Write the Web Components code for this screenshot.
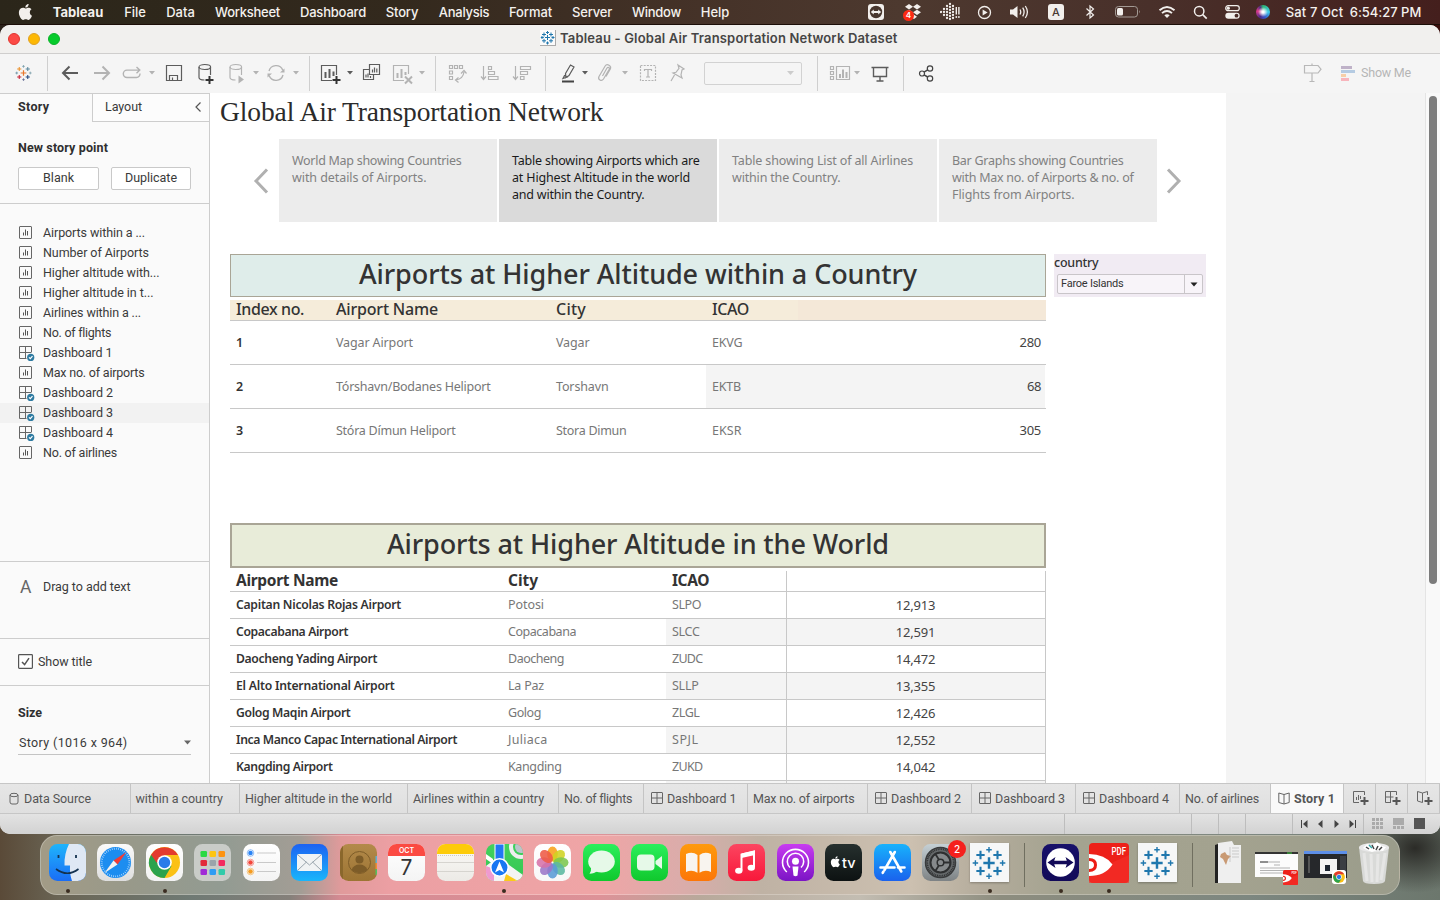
<!DOCTYPE html>
<html lang="en">
<head>
<meta charset="utf-8">
<title>Tableau - Global Air Transportation Network Dataset</title>
<style>
html,body{margin:0;padding:0;width:1440px;height:900px;overflow:hidden}
body{font-family:Roboto,"Liberation Sans",sans-serif;font-size:12px;color:#333}
</style>
</head>
<body>
<mac-desktop>
  <mac-menubar></mac-menubar>
  <app-window>
    <title-bar slot="title"></title-bar>
    <tool-bar slot="tools"></tool-bar>
    <story-sidebar slot="side"></story-sidebar>
    <story-canvas slot="main"></story-canvas>
    <sheet-tabs slot="tabs"></sheet-tabs>
    <status-bar slot="status"></status-bar>
  </app-window>
  <mac-dock></mac-dock>
</mac-desktop>
<script>
const define=(name,css,html)=>customElements.define(name,class extends HTMLElement{
  constructor(){super();this.attachShadow({mode:'open'});}
  connectedCallback(){
    if(this.shadowRoot.childNodes.length)return;
    this.shadowRoot.innerHTML='<style>*,:host{box-sizing:border-box}'+css+'</style>'+(typeof html==='function'?html(this):html);
  }
});

/* Text run tracked to an exact advance width (w attribute, px). */
customElements.define('fit-text',class extends HTMLElement{
  constructor(){super();this.attachShadow({mode:'open'}).innerHTML='<style>:host{display:inline-block;white-space:nowrap;flex:none}span{display:inline-block;white-space:pre}</style><span><slot></slot></span>';}
  connectedCallback(){queueMicrotask(()=>{
    const w=+this.getAttribute('w');if(!w)return;
    const s=this.shadowRoot.querySelector('span'),n=this.textContent.length;
    s.style.letterSpacing=((w-s.getBoundingClientRect().width)/n).toFixed(3)+'px';
    this.style.width=w+'px';
  });}
});
const T=(t,w,c='')=>`<fit-text w="${w}" class="${c}">${t}</fit-text>`;
const svg=(w,h,body,extra='')=>`<svg width="${w}" height="${h}" viewBox="0 0 ${w} ${h}" fill="none" ${extra}>${body}</svg>`;
/* Lays items in a flex row; each entry is [start, width, html], gaps become margins. */
const row=(items,start=0)=>{let x=start;return items.map(([l,w,h])=>{const m=l-x;x=l+w;return `<div class="c" style="margin-left:${m}px;width:${w}px">${h}</div>`}).join('')};

const D='#5c5c5c',G='#b3b3b3';
const plus=(x,y,r,c,w)=>`<path d="M${x-r} ${y}h${2*r}M${x} ${y-r}v${2*r}" stroke="${c}" stroke-width="${w}"/>`;
const tableauLogo=(s,c)=>{c=c||['#e8762c','#eb912b','#59879b','#c72035','#1f447e','#7199a6','#5b6591','#59879b','#7199a6'];
 return `<svg width="${s}" height="${s}" viewBox="0 0 36 36" fill="none">`+plus(18,18,6,c[0],2.6)+plus(9,9.5,4.4,c[1],2.2)+plus(27,9.5,4.4,c[2],2.2)+plus(9,26.5,4.4,c[3],2.2)+plus(27,26.5,4.4,c[4],2.2)+plus(18,4,2.9,c[5],1.5)+plus(18,32,2.9,c[6],1.5)+plus(3.6,18,2.9,c[7],1.5)+plus(32.4,18,2.9,c[8],1.5)+'</svg>'};
const blue=Array(9).fill('#1f77ad');
const caret=c=>svg(6,4,`<path d="M0 0h6L3 3.5z" fill="${c}"/>`);
const dash4=(c)=>svg(12,12,`<rect x=".5" y=".5" width="11" height="11" rx=".5" stroke="${c}"/><path d="M6 .5v11M.5 6h11" stroke="${c}"/>`);
const apple=(s,c)=>`<svg width="${s}" height="${s}" viewBox="0 0 24 24"><path fill="${c}" d="M17.05 12.54c-.03-2.7 2.2-4 2.3-4.06-1.25-1.83-3.2-2.08-3.9-2.11-1.66-.17-3.24.98-4.08.98-.84 0-2.14-.95-3.52-.93-1.81.03-3.48 1.05-4.41 2.67-1.88 3.26-.48 8.1 1.35 10.75.9 1.3 1.97 2.75 3.37 2.7 1.35-.05 1.86-.87 3.5-.87 1.63 0 2.1.87 3.52.84 1.46-.02 2.38-1.32 3.27-2.62 1.03-1.5 1.46-2.96 1.48-3.04-.03-.01-2.84-1.09-2.88-4.31zM14.37 4.6c.74-.9 1.24-2.15 1.1-3.4-1.07.04-2.37.71-3.13 1.61-.69.8-1.29 2.07-1.13 3.29 1.2.09 2.42-.6 3.16-1.5z"/></svg>`;

define('mac-desktop',`:host{display:flex;flex-direction:column;width:1440px;height:900px;
 background:linear-gradient(90deg,#2b221b,#3a0f0c) 0 0/100% 60px no-repeat,radial-gradient(ellipse 60px 45px at 1415px 848px,#2b2b27,transparent),linear-gradient(90deg,#5a4a38 0,#6a6555 60px,#6f7a74 190px,#85807a 290px,#d48a92 340px,#dd9298 600px,#b8a99b 700px,#c3bdb2 860px,#8d8d7f 1000px,#7d8780 1250px,#6c776d 1440px)}`,'<slot></slot>');

define('mac-menubar',`:host{display:flex;align-items:flex-start;height:25px;font:500 13px Inter,sans-serif;color:#f4f1ee;flex:none;
 background:linear-gradient(180deg,transparent 24px,#1c0e08 24px),linear-gradient(90deg,#2b261a 0,#33291d 400px,#453228 700px,#4d392f 900px,#49302a 1150px,#441f1d 1440px)}
 .c{display:flex;justify-content:center;flex:none;height:24px;align-items:center;position:relative}
 .badge{position:absolute;left:0;top:10px;width:11px;height:11px;border-radius:6px;background:#fb2a14;color:#fff;font:600 8px/11px Inter;text-align:center}
 .siri{width:14px;height:14px;border-radius:7px;background:radial-gradient(circle at 50% 50%,#fff 0 1px,transparent 5px),conic-gradient(#2bb673,#3ecbe8 90deg,#3456c9 160deg,#4a2a8a 210deg,#e23a8c 280deg,#50307e 330deg,#2bb673)}
 .a{width:16px;height:16px;border-radius:3px;background:#f2efec;color:#4a3a33;font:500 11px/16px Inter;text-align:center}`,
 ()=>row([
 [17,18,apple(18,'#f2efec')],
 [53,50,T('Tableau',50.5).replace('<fit-text','<fit-text style="font-weight:700"')],
 [124,22,T('File',21.5)],[166,29,T('Data',28.5)],[215,65,T('Worksheet',65)],[300,66,T('Dashboard',66)],[386,32,T('Story',32.5)],[439,50,T('Analysis',50.5)],[509,43,T('Format',43)],[572,40,T('Server',40)],[632,49,T('Window',49)],[701,28,T('Help',28.5)],
 [868,16,svg(16,16,'<rect width="16" height="16" rx="3" fill="#f2efec"/><circle cx="8" cy="8" r="6.2" fill="#48362d"/><path d="M2.8 8l3-2.5v1.6h4.4V5.5l3 2.5-3 2.5V8.9H5.8v1.6z" fill="#f2efec"/>')],
 [903,20,svg(20,18,'<path d="M6 1l4 2.7-4 2.7-4-2.7zM14 1l4 2.7-4 2.7-4-2.7zM6 6.7l4 2.6-4 2.7-4-2.7zM14 6.7l4 2.6-4 2.7-4-2.7zM10 11l4 2.7-3 2.3-4-2.3z" fill="#f2efec"/>')+'<span class="badge">4</span>'],
 [940,20,svg(20,20,[[1.5,[10]],[4.5,[7,10,13]],[7.5,[4,7,10,13,16]],[10.5,[2,5,8,11,14,17]],[13.5,[4,7,10,13,16]]].map(([x,ys])=>ys.map(y=>`<circle cx="${x-.5}" cy="${y}" r="1.15" fill="#f2efec"/>`).join('')).join('')+'<path d="M16.3 5v7.5M18.9 5v7.5" stroke="#f2efec" stroke-width="1.4"/><circle cx="16.3" cy="15" r=".9" fill="#f2efec"/><circle cx="18.9" cy="15" r=".9" fill="#f2efec"/>')],
 [977,15,svg(15,15,'<circle cx="7.5" cy="7.5" r="6" stroke="#f2efec" stroke-width="1.3"/><path d="M5.6 4.5l5 3-5 3z" fill="#f2efec"/>')],
 [1009,20,svg(20,16,'<path d="M1 5.5h3L8.5 2v12L4 10.5H1z" fill="#f2efec"/><path d="M11 5.5q1.5 2.5 0 5M13.7 3.7q2.8 4.3 0 8.6M16.3 2q4.2 6 0 12" stroke="#f2efec" stroke-width="1.3"/>')],
 [1048,16,'<div class="a">A</div>'],
 [1085,10,svg(10,16,'<path d="M1.5 4.5l7 6.500L5 14V2l3.500 3-7 6.500" stroke="#f2efec" stroke-width="1.2"/>')],
 [1114,27,svg(27,14,'<rect x="1.5" y="1.5" width="22" height="10.5" rx="3" stroke="#a39a94"/><path d="M25 5q1.6 1.7 0 3.5z" fill="#a39a94"/><rect x="3" y="3" width="6" height="7.5" rx="1.5" fill="#f2efec"/>')],
 [1158,18,svg(18,14,'<path d="M1.5 5.2q7.500-6.600 15 0M4 8.100q5-4.300 10 0" stroke="#f2efec" stroke-width="1.900"/><path d="M6.300 10.300q2.700-2.200 5.400 0L9 13z" fill="#f2efec"/>')],
 [1193,15,svg(15,15,'<circle cx="6.200" cy="6.200" r="4.700" stroke="#f2efec" stroke-width="1.500"/><path d="M9.700 9.700l4 4" stroke="#f2efec" stroke-width="1.700"/>')],
 [1225,15,svg(15,14,'<rect x=".7" y=".7" width="13.600" height="5" rx="2.500" stroke="#f2efec" stroke-width="1.200"/><circle cx="3.300" cy="3.200" r="1.600" fill="#f2efec"/><rect x=".3" y="7.700" width="14.400" height="6" rx="3" fill="#f2efec"/><circle cx="11.500" cy="10.700" r="1.900" fill="#4a2c28"/>')],
 [1256,14,'<div class="siri"></div>'],
 [1286,57,T('Sat 7 Oct',57.5)],[1350,71,T('6:54:27 PM',71.5)]
 ]));

define('app-window',`:host{display:flex;flex-direction:column;width:1440px;height:809px;border-radius:10px;overflow:hidden;background:#f4f4f4;flex:none}
 .mid{display:flex;height:690px;flex:none}`,
 '<slot name="title"></slot><slot name="tools"></slot><div class="mid"><slot name="side"></slot><slot name="main"></slot></div><slot name="tabs"></slot><slot name="status"></slot>');

define('title-bar',`:host{display:flex;align-items:center;height:29px;border-bottom:1px solid #cfcecd;background:#f1f0ee;flex:none;padding-left:8px;font:600 13px Inter,sans-serif;color:#464544}
 i{width:12px;height:12px;border-radius:6px;margin-right:8px;flex:none}
 fit-text{margin-bottom:2px}
 .ic{width:16px;height:16px;background:#fbfbfb;border-right:1px solid #aaa;border-bottom:1px solid #aaa;margin:0 4px 2px 472px;display:flex;align-items:center;justify-content:center}`,
 `<i style="background:#fc4a45;border:1px solid #e0352f"></i><i style="background:#fdb803;border:1px solid #dfa023"></i><i style="background:#06cb2b;border:1px solid #0bb12a"></i><div class="ic">${svg(15,15,'<path d="M7.500 5v5M5 7.500h5M4 2.500v4M2 4.500h4M11 2.500v4M9 4.500h4M4 8.800v4M2 10.800h4M11 8.800v4M9 10.800h4M7.500 1v3M6 2.500h3M7.500 11.500v3M6 13h3M.8 7.500h3M2 6v3M11.500 7.500h3M13 6v3" stroke="#1f77ad" stroke-width="1"/>')}</div>${T('Tableau - Global Air Transportation Network Dataset',337.5)}`);

define('tool-bar',`:host{display:flex;align-items:center;height:39px;background:#f5f5f5;flex:none}
 .c{display:flex;justify-content:center;align-items:center;flex:none;height:39px;padding-bottom:1px}
 .s{width:1px;height:35px;background:#cfcfcf}.combo{width:98px;height:23px;border:1px solid #d2d2d2;border-radius:2px;display:flex;align-items:center;justify-content:flex-end;padding-right:6px}
 .sm{color:#b5b5b5;font:12.5px Roboto;margin-bottom:1px}svg{display:block}`,
 ()=>{const S='<div class="s"></div>';
 const I=(c,b)=>svg(24,24,b,`stroke="${c}" stroke-width="1.200"`);
 const ca=(cx,c)=>[cx-3,6,caret(c)];
 const cyl='<path d="M5 6v10.500c0 1.500 2.500 2.500 5.500 2.500M16.500 6v8"/><ellipse cx="10.800" cy="6" rx="5.800" ry="2.500"/>';
 return row([
 [15,17,tableauLogo(18)],[47,1,S],
 [58,24,I(D,'<path d="M20 12H5M11.500 5.500L5 12l6.500 6.500" stroke-width="2"/>')],
 [90,24,I(G,'<path d="M4 12h15M12.500 5.500L19 12l-6.500 6.500" stroke-width="2"/>')],
 [122,20,svg(20,16,`<path d="M9.500 12.500H5a3.700 3.700 0 0 1 0-7.400h12M14.500 2l3.300 3.100L14.500 8.300M18 8.500a3.800 3.800 0 0 1-3.500 4h-5" stroke="${G}" stroke-width="1.400"/>`)],
 ca(152,G),
 [163,22,svg(22,24,`<path d="M3.500 4.500h15v15h-15zM6.500 19.500v-5h8v5M9.500 19v-2.500" stroke="${D}" stroke-width="1.200"/>`)],
 [194,24,I(D,cyl+'<path d="M15.500 15v8M11.500 19h8" stroke="#333" stroke-width="2"/>')],
 [225,24,I(G,cyl+`<path d="M13.500 14.500v8l5.500-4z" fill="${G}" stroke="none"/>`)],
 ca(256,G),
 [264,24,I(G,'<path d="M5 10a7.300 7.300 0 0 1 13.800-.8M19 14a7.300 7.300 0 0 1-13.800.8" stroke-width="1.400"/><path d="M20.500 7.500v4h-4.500zM3.500 16.500v-4H8z" fill="#b3b3b3" stroke="none"/>')],
 ca(296,G),[309,1,S],
 [319,25,svg(25,24,`<path d="M17.500 14V4.500h-15v15H13" stroke="${D}" stroke-width="1.200"/><path d="M6.500 11v6M10.500 8v9M14.500 10.500V15" stroke="${D}" stroke-width="2"/><path d="M17.500 15v8M13.500 19h8" stroke="#333" stroke-width="2"/>`)],
 ca(350,D),
 [360,24,I(D,'<path d="M9.500 3.500h10v10h-10zM9.500 8.500h-6v10h10v-5"/><path d="M12.500 8.500v3M14.500 6.500v5M16.800 7.500v4M6 13.500v3M8 12.500v4M10.500 15v2"/>')],
 [391,24,I(G,'<path d="M17.500 13V4.500h-15v15H13"/><path d="M6.500 12v5M10.500 8v9M14.500 11v3" stroke-width="2"/><path d="M14 15.500l7 7M21 15.500l-7 7" stroke-width="2"/>')],
 ca(422,G),[435,1,S],
 [445,24,I(G,'<path d="M4.500 4.500h3v3h-3zM9.500 4.500h3v3h-3zM14.500 4.500h3v3h-3zM4.500 10h3v3h-3zM4.500 15.500h3v3h-3z"/><path d="M11 19q7-1 8-8M16 12.500l3-3 2.500 3M13.500 16.500L10.500 19l3 2.500"/>')],
 [478,24,I(G,'<path d="M5.500 5v13M3 15.500L5.500 18.500 8 15.500M10.500 5.500h3v3h-3zM10.500 10.500h6v3h-6zM10.500 15.500h9.500v3h-9.500z"/>')],
 [510,24,I(G,'<path d="M5.500 5v13M3 15.500L5.500 18.500 8 15.500M10.500 5.500h10v3h-10zM10.500 10.500h7v3h-7zM10.500 15.500h3.500v3h-3.500z"/>')],
 [545,1,S],
 [556,24,I(D,'<path d="M9.500 12.500L14.500 4l3.500 2-5 8.500-3 2zM8.500 14.500l2.500 1.500-4 1.500z"/><path d="M6 20.500h12" stroke-width="2" stroke="#444"/>')],
 ca(585,D),
 [593,24,I(G,'<path d="M9.500 15l4.500-8c1-1.500 3-.3 2.200 1.200L10.500 18c-2 3-6 .5-4.500-2.500l6-10.300c2-3.200 7-.4 5.200 3L13 15.500"/>')],
 ca(625,G),
 [636,24,I(G,'<path d="M4.500 4.500h15v15h-15z" stroke-dasharray="2 1.200"/><path d="M8.500 10V8.500h7V10M12 8.500v7.500M10 16h4"/>')],
 [665,24,I(G,'<path d="M13 4l6 4-2 1-1 5 1 3-9-5 3-.7 3-4zM9.500 14L6 20"/>')],
 [704,98,`<div class="combo">${svg(8,5,'<path d="M0 0h7L3.500 4z" fill="#ccc"/>')}</div>`],
 [817,1,S],
 [828,24,I(G,'<path d="M2.500 5.500h3v3h-3zM2.500 10.500h3v3h-3zM2.500 15.500h3v3h-3zM8.500 5.500h13v13h-13z"/><path d="M12 13v4M15 8.500v8.500M18.500 11v6" stroke-width="2"/>')],
 ca(857,G),
 [868,24,I(D,'<path d="M3.500 6.500h17M5.500 6.500v9h13v-9M12 15.500v4.500M8.500 20h7" stroke-width="1.400"/>')],
 [903,1,S],
 [914,24,I('#444','<circle cx="8" cy="12.500" r="2.500"/><circle cx="16" cy="7.500" r="2.700"/><circle cx="16" cy="17.500" r="2.700"/><path d="M10 11.200l3.700-2.300M10 13.800l3.700 2.200" stroke-width="1.500"/>')],
 [1300,24,I('#b8b8b8','<path d="M12 2.500v2M4.500 4.500h13.500l3 3.700-3 3.800H4.500zM12 12v8.500M9.500 20.500h5"/>')],
 [1341,14,svg(14,15,'<path fill="#bfb2c8" d="M0 0h11v3H0z"/><path fill="#b5cbe2" d="M0 4h14v3H0z"/><path fill="#f7cfa8" d="M0 8h5v3H0z"/><path fill="#f8b5bc" d="M0 12h8v3H0z"/>')],
 [1361,50,T('Show Me',50,'sm')]
 ])}
);

const wsIcon=svg(17,17,'<rect x="1.500" y="2.500" width="12" height="12" rx=".5" stroke="#666" stroke-width="1"/><path d="M5.500 8.500v3M7.500 5.500v6M9.500 7v4.500" stroke="#555"/>');
const dsIcon=svg(17,17,'<path d="M13.500 8V2.500h-12v12h7M7.500 2.500v12M1.500 8.500h12" stroke="#666"/><circle cx="12.700" cy="13.400" r="3.600" fill="#2f7ba1"/><path d="M11 13.400l1.300 1.300 2.200-2.600" stroke="#fff" stroke-width="1.200"/>');
define('sheet-item',`:host{display:flex;align-items:center;height:20px;padding:0 0 2px 18px;gap:8px}:host([on]){background:#f2f2f2}svg{flex:none;margin-bottom:-1px}`,
 el=>(el.hasAttribute('dash')?dsIcon:wsIcon)+T(el.getAttribute('label'),el.getAttribute('w')));

define('story-sidebar',`:host{display:flex;flex-direction:column;width:210px;height:690px;border-right:1px solid #cdcdcd;background:#fafafa;font:12.5px Roboto,sans-serif;color:#3a3a3a;flex:none}
 .tabs{display:flex;height:29px;border-top:1px solid #cdcdcd;flex:none}
 .t1{width:92px;padding:5px 0 0 18px}.t2{flex:1;border-left:1px solid #cdcdcd;border-bottom:1px solid #cdcdcd;padding:5px 7px 0 12px;display:flex;justify-content:space-between;background:#fcfcfc}
 .b{font-weight:700;font-size:12.5px;color:#2f2f2f}
 .new{height:82px;padding:18px 0 0 18px;border-bottom:1px solid #cdcdcd;flex:none}
 .btns{display:flex;gap:12px;margin-top:12px}.btn{height:23px;width:81px;border:1px solid #c9c9c9;border-radius:2px;background:#fff;display:flex;align-items:center;justify-content:center;padding-bottom:2px}.btn+.btn{width:80px}
 .list{height:358px;padding-top:19px;border-bottom:1px solid #cdcdcd;flex:none}
 .drag{height:77px;border-bottom:1px solid #cdcdcd;padding:17px 0 0 20px;display:flex;gap:12px;flex:none}
 .big{font:17.5px/17px Roboto;color:#666;width:11px}
 .show{height:47px;border-bottom:1px solid #cdcdcd;display:flex;align-items:center;padding:0 0 2px 18px;gap:5px;flex:none}
 .size{padding:19px 18px 0}.sel{margin-top:12px;height:23px;border-bottom:1px solid #c4c4c4;display:flex;justify-content:space-between;align-items:center;padding:0 0 1px 1px}`,
 `<div class="tabs"><div class="t1">${T('Story',31.5,'b')}</div><div class="t2">${T('Layout',37)}${svg(8,11,'<path d="M6.500 1.500L2 6l4.500 4.500" stroke="#555" stroke-width="1.200"/>','style="margin-top:2px"')}</div></div>
 <div class="new">${T('New story point',90,'b')}<div class="btns"><div class="btn">${T('Blank',31)}</div><div class="btn">${T('Duplicate',52)}</div></div></div>
 <div class="list">${[['Airports within a ...',102],['Number of Airports',106],['Higher altitude with...',116.5],['Higher altitude in t...',110.5],['Airlines within a ...',98],['No. of flights',68],['Dashboard 1',69.5,1],['Max no. of airports',101.5],['Dashboard 2',70,1],['Dashboard 3',70,1,1],['Dashboard 4',70,1],['No. of airlines',74]].map(([l,w,d,o])=>`<sheet-item label="${l}" w="${w}" ${d?'dash':''} ${o?'on':''}></sheet-item>`).join('')}</div>
 <div class="drag"><span class="big">A</span>${T('Drag to add text',87.5)}</div>
 <div class="show">${svg(15,15,'<rect x=".6" y=".6" width="13.800" height="13.800" rx=".8" stroke="#555" stroke-width="1.200" fill="#fff"/><path d="M4 8l2.600 2.600 4.400-6.500" stroke="#555" stroke-width="1.500"/>')}${T('Show title',54)}</div>
 <div class="size">${T('Size',24,'b')}<div class="sel">${T('Story (1016 x 964)',108.5)}${svg(7,5,'<path d="M0 .5h7L3.500 4.500z" fill="#666"/>')}</div></div>`);

define('story-point',`:host{display:flex;flex-direction:column;width:218px;height:83px;padding:13px 0 0 13px;background:#ececec;color:#818181;font:12.5px/17px "Noto Sans",sans-serif}:host([active]){background:#dadada;color:#1a1a1a}fit-text{height:17px}`,
 el=>el.getAttribute('lines').split('|').map((l,i)=>T(l,el.getAttribute('ws').split(',')[i])).join(''));

define('story-navigator',`:host{display:flex;align-items:center;height:83px;margin-left:43px;gap:2px;flex:none}svg{flex:none}.l{margin-right:8px}.r{margin-left:7px}`,
 `${svg(16,28,'<path d="M14 2.500L3 14l11 11.500" stroke="#b0b0b0" stroke-width="3"/>','class="l"')}
 <story-point lines="World Map showing Countries|with details of Airports." ws="169.500,134.500"></story-point>
 <story-point active lines="Table showing Airports which are|at Highest Altitude in the world|and within the Country." ws="187.500,178,132.500"></story-point>
 <story-point lines="Table showing List of all Airlines|within the Country." ws="181,108.500"></story-point>
 <story-point lines="Bar Graphs showing Countries|with Max no. of Airports &amp;amp; no. of|Flights from Airports." ws="171.500,181.500,122.500"></story-point>
 ${svg(16,28,'<path d="M2 2.500L13 14 2 25.500" stroke="#b0b0b0" stroke-width="3"/>','class="r"')}`);

define('sheet-title',`:host{display:flex;align-items:center;justify-content:center;width:816px;height:43px;padding-bottom:3px;border:1px solid #a9a596;background:#dfedea;font:500 27px/38px "Noto Sans",sans-serif;color:#333;flex:none}:host([world]){height:45px;border-width:2px;background:#e8ecd9}`,'<slot></slot>');

define('country-table',`:host{display:block;width:816px;margin-top:3px;font:12.5px "Noto Sans",sans-serif;color:#777;flex:none}
 .r{display:grid;grid-template-columns:100px 220px 156px 1fr;border-bottom:1px solid #c8c8c8;height:44px;align-items:center}
 .r>*{padding-left:6px;height:100%;display:flex;align-items:center}
 .h{height:21px;background:linear-gradient(90deg,#f5ecda 568px,#f4e8d8 568px);color:#333;font-size:16px;line-height:18px;font-weight:500}.h>*{padding-bottom:2px}
 .k{color:#333;font-weight:600}.last{justify-content:space-between;padding-right:5px}.n{color:#444;font-size:13px;margin-bottom:1px}.alt .last{background:#f4f4f4;margin-right:1px;padding-right:4px}`,
 ()=>`<div class="r h"><div>${T('Index no.',68)}</div><div>${T('Airport Name',102)}</div><div>${T('City',30)}</div><div>${T('ICAO',37)}</div></div>`+
 [['1','Vagar Airport',77,'Vagar',33.5,'EKVG',30.5,'280',21.5],['2','Tórshavn/Bodanes Heliport',154.5,'Torshavn',52.5,'EKTB',29,'68',14],['3','Stóra Dímun Heliport',119.5,'Stora Dimun',70.5,'EKSR',29.5,'305',21.5]].map((a,i)=>`<div class="r ${i==1?'alt':''}"><div class="k">${a[0]}</div><div>${T(a[1],a[2])}</div><div>${T(a[3],a[4])}</div><div class="last">${T(a[5],a[6])}${T(a[7],a[8],'n')}</div></div>`).join(''));

define('world-table',`:host{display:block;width:816px;height:212px;margin-top:3px;font:12.5px/18px "Noto Sans",sans-serif;color:#777;flex:none}
 .r{display:grid;grid-template-columns:272px 164px 120px 1fr;border-bottom:1px solid #c8c8c8;height:27px}
 .r>*{padding:0 0 1px 6px;display:flex;align-items:center}
 .r>:nth-child(2){margin-right:6px}.r>:nth-child(2)+*{margin-left:0}
 .r>:nth-child(4){border:solid #c8c8c8;border-width:0 1px;color:#444;font-size:13px;padding:0 1px 0 0;justify-content:center}
 .alt>:nth-child(n+3){background:#f4f4f4}
 .h{height:21px}.h>*{color:#333;font-size:15.5px;font-weight:700;padding-bottom:3px}.k{color:#333;font-weight:600;font-size:12.2px}`,
 ()=>`<div class="r h"><div>${T('Airport Name',102)}</div><div>${T('City',30)}</div><div>${T('ICAO',37)}</div><div></div></div>`+
 [['Capitan Nicolas Rojas Airport',165,'Potosi',36,'SLPO',29,'12,913'],['Copacabana Airport',112,'Copacabana',68,'SLCC',27.5,'12,591'],['Daocheng Yading Airport',141,'Daocheng',56,'ZUDC',30.5,'14,472'],['El Alto International Airport',158.5,'La Paz',36,'SLLP',26.5,'13,355'],['Golog Maqin Airport',114.5,'Golog',33,'ZLGL',27.5,'12,426'],['Inca Manco Capac International Airport',221,'Juliaca',39.5,'SPJL',26.5,'12,552'],['Kangding Airport',96.5,'Kangding',53.5,'ZUKD',30.5,'14,042'],0].map((a,i)=>`<div class="r ${i%2?'alt':''}">`+(a?`<div class="k">${T(a[0],a[1])}</div><div>${T(a[2],a[3])}</div><div>${T(a[4],a[5])}</div><div>${T(a[6],39.5)}</div>`:'<div></div><div></div><div></div><div></div>')+'</div>').join(''));

define('country-filter',`:host{display:block;width:152px;height:43px;background:#f1ebf3;color:#333;font:500 12.5px/17px "Noto Sans",sans-serif;flex:none}
 fit-text{height:17px}
 .s{display:flex;height:20px;width:146px;margin:3px 0 0 3px;border:1px solid #c9c5c9;border-radius:2px;background:#f8f4f9;font:400 11px/18px Roboto;padding-left:3px;justify-content:space-between}
 .d{width:18px;border-left:1px solid #c9c5c9;display:flex;align-items:center;justify-content:center}`,
 `<div style="height:17px">${T('country',44.5)}</div><div class="s">${T('Faroe Islands',62.5)}<div class="d">${svg(8,5,'<path d="M.5 .5h7L4 4.500z" fill="#222"/>')}</div></div>`);

define('story-canvas',`:host{display:flex;width:1230px;height:690px;background:#f4f4f4}
 .page{width:1016px;height:690px;background:#fff;display:flex;flex-direction:column;overflow:hidden;flex:none}
 .ttl{font:27.5px/34px "Liberation Serif",serif;color:#2b2b2b;height:46px;padding:2px 0 0 10px;flex:none}
 .body{display:flex;gap:8px;margin:32px 0 0 20px}.col{display:flex;flex-direction:column;width:816px}
 .gap{height:70px}
 .sb{margin-left:199px;width:15px;border-left:1px solid #e4e4e4;background:#f9f9f9;display:flex;justify-content:center;padding:3px 1px 0 0}
 .sb i{width:8px;height:488px;border-radius:4px;background:#7c7c7c}`,
 `<div class="page"><div class="ttl">${T('Global Air Transportation Network',383.5)}</div><story-navigator></story-navigator>
 <div class="body"><div class="col"><sheet-title>${T('Airports at Higher Altitude within a Country',558)}</sheet-title><country-table></country-table><div class="gap"></div><sheet-title world>${T('Airports at Higher Altitude in the World',502)}</sheet-title><world-table></world-table></div><country-filter></country-filter></div></div><div class="sb"><i></i></div>`);

const book=svg(12,13,'<path d="M6 2.500L.8 1v9.500L6 12l5.200-1.500V1zM6 2.500V12" stroke="#666"/>');
const addMark='<path d="M12.500 8v8M8.500 12h8" stroke="#555" stroke-width="2"/>';
define('sheet-tabs',`:host{display:flex;height:31px;border-top:1px solid #c6c6c6;border-bottom:1px solid #c6c6c6;background:linear-gradient(180deg,#e6e6e6,#dfdfdf);font:12.5px Roboto,sans-serif;color:#555;flex:none;position:relative}
 .t{display:flex;align-items:center;border-right:1px solid #c4c4c4;gap:5px;padding:0 0 1px 5px;overflow:hidden;flex:none}
 .t.on{background:#f9f9f9;font-weight:700}.t.first{padding-left:9px}.clip{justify-content:flex-end;padding-right:16px}
 .t.d,.t.on{padding-left:7px;gap:4px}.t.add{padding-left:8px}`,
 ()=>{let x=0;const d=dash4('#666');
 return [[131,svg(10,13,'<ellipse cx="5" cy="3" rx="4" ry="1.700" stroke="#666"/><path d="M1 3v7q0 2 2 2h4q2 0 2-2V3" stroke="#666"/>')+T('Data Source',67),'first'],[240,T('within a country',87.5),'clip'],[408,T('Higher altitude in the world',147)],[559,T('Airlines within a country',131)],[644,T('No. of flights',68)],[748,d+T('Dashboard 1',69.5),'d'],[868,T('Max no. of airports',101.5)],[972,d+T('Dashboard 2',70),'d'],[1076,d+T('Dashboard 3',70),'d'],[1180,d+T('Dashboard 4',70),'d'],[1271,T('No. of airlines',74)],[1344,book+T('Story 1',41),'on'],
 [1376,svg(20,18,'<path d="M12.500 6V2.500h-11v11H7M4.500 8v3M6.500 6v5M8.500 7v3" stroke="#666"/>'+addMark),'add'],[1408,svg(20,18,'<path d="M12.500 6V2.500h-11v11H7M6.500 2.500v11M1.500 8h8" stroke="#666"/>'+addMark),'add'],[1440,svg(20,18,'<path d="M6.500 4L1.500 2.500v9.500l5 1.500V4l5-1.500V6" stroke="#666"/>'+addMark),'add']].map(([e,h,c])=>{const w=e-x;x=e;return `<div class="t ${c||''}" style="width:${w}px">${h}</div>`}).join('')});

define('status-bar',`:host{display:flex;height:20px;background:linear-gradient(180deg,#e3e3e3,#d2d2d2);flex:none;justify-content:flex-end}
 div{border-left:1px solid #bdbdbd;display:flex;align-items:center;flex:none;padding-bottom:1px}`,
 `<div style="width:127px"></div><div style="width:27px"></div><div style="width:27px"></div><div style="width:47px"></div>
 <div style="width:71px;justify-content:space-between;padding:0 7px 1px 8px">${svg(7,8,'<path d="M.5 0v8" stroke="#444"/><path d="M6.500 0v8L2 4z" fill="#444"/>')}${svg(5,8,'<path d="M4.500 0v8L0 4z" fill="#444"/>')}${svg(5,8,'<path d="M.5 0v8L5 4z" fill="#444"/>')}${svg(7,8,'<path d="M6.500 0v8" stroke="#444"/><path d="M.5 0v8L5 4z" fill="#444"/>')}</div>
 <div style="width:77px;padding-left:8px;gap:10px">${svg(11,11,[0,4,8].map(y=>[0,4,8].map(x=>`<rect x="${x}" y="${y}" width="3" height="3" fill="#aaa"/>`).join('')).join(''))}${svg(11,11,'<path fill="#aaa" d="M0 0h11v7H0zM0 8h3v3H0zM4 8h3v3H4zM8 8h3v3H8z"/>')}${svg(11,11,'<path fill="#555" d="M0 0h11v11H0z"/>')}</div>`);

let gid=0;
const app=(stops,body)=>{const id='g'+(gid++);return `<svg width="37" height="37" viewBox="0 0 37 37" fill="none" style="overflow:visible"><defs><linearGradient id="${id}" x1="0" y1="0" x2="0" y2="1"><stop stop-color="${stops[0]}"/><stop offset="1" stop-color="${stops[1]}"/></linearGradient><clipPath id="c${id}"><rect width="37" height="37" rx="8.500"/></clipPath></defs><g clip-path="url(#c${id})"><rect width="37" height="37" fill="url(#${id})"/>${body}</g></svg>`};
const pie='<circle cx="18.500" cy="18.500" r="15.500" fill="#fbc116"/><path d="M18.500 18.500L5.100 10.700A15.500 15.500 0 0 0 18.500 34l7-12z" fill="#2ba24c"/><path d="M18.500 18.500h-8L5.100 10.700a15.500 15.500 0 0 1 26.800.3H18.500z" fill="#e33b2e"/><circle cx="18.500" cy="18.500" r="7.300" fill="#fff"/><circle cx="18.500" cy="18.500" r="5.700" fill="#2b7be9"/>';
const pdf=s=>`<svg width="${s}" height="${s}" viewBox="0 0 40 40" fill="none"><rect width="40" height="40" rx="4" fill="#ed2019"/><path d="M0 40V30L40 12v28z" fill="#f5302a" opacity=".6"/><path d="M0 11q16 0 23.500 10.500Q16 33 0 33z" fill="#fff"/><path d="M0 16.500q6.500 0 6.500 5.500t-6.500 5.500" stroke="#ed1c15" stroke-width="3"/><text x="22.500" y="11.500" fill="#fff" font-family="Roboto" font-weight="500" font-size="10" textLength="14.500" lengthAdjust="spacingAndGlyphs">PDF</text></svg>`;
const tabIcon=`<div class="tab">${tableauLogo(34,blue)}</div>`;
const icons={
finder:app(['#1fb4fb','#1a6df5'],'<path d="M20 0q-5 10-4.500 21.500h5.500Q20.500 30 23 37h14V0z" fill="#dfe8f4"/><path d="M9.500 11v3M27 11v3" stroke="#14324f" stroke-width="1.800"/><path d="M7 25q11.500 8.500 22.500 0" stroke="#14324f" stroke-width="1.600"/>'),
safari:app(['#fafafa','#dedede'],'<circle cx="18.500" cy="18.500" r="15.500" fill="#1c8df0"/><circle cx="18.500" cy="18.500" r="13.800" stroke="#bfe0ff" stroke-width="1.800" stroke-dasharray=".7 1.400"/><path d="M29.500 8L16.500 16.500l4 4z" fill="#f33b35"/><path d="M7.500 29L20.500 20.500l-4-4z" fill="#f2f2f2"/>'),
chrome:app(['#fff','#f2f2f2'],pie),
launch:app(['#c9ccc8','#c9ccc8'],['#2bd944','#fdc511','#fd9310','#e22b3b','#9aa4ab','#f32b5f','#a02bd6','#2e9cf3','#31cbaa'].map((c,i)=>`<rect x="${6.5+(i%3)*9}" y="${7+(i/3|0)*9}" width="6.500" height="6" rx="1.300" fill="${c}"/>`).join('')),
rem:app(['#fff','#f3f3f3'],[['#2a84f5',9],['#f4463a',18.5],['#f59b1f',27.5]].map(([c,y])=>`<circle cx="7.500" cy="${y}" r="3.300" stroke="${c}" opacity=".5"/><circle cx="7.500" cy="${y}" r="2.300" fill="${c}"/><path d="M14 ${y}h19" stroke="#c9c9c9" stroke-width="1"/>`).join('')),
mail:app(['#1d62f2','#19b6fb'],'<rect x="6" y="10" width="25" height="17" rx="2" fill="#f1f3f4"/><path d="M7 11l11.500 10L30 11M7 26l8.500-8M30 26l-8.500-8" stroke="#9aa5ad" stroke-width="1"/>'),
contacts:app(['#b38a4a','#9c7433'],'<path d="M0 0h3v37H0z" fill="#8a672c"/><circle cx="19.500" cy="18.500" r="11" stroke="#7d5c28" stroke-width="1"/><circle cx="19.500" cy="15.500" r="4" fill="#7d5c28"/><path d="M11.500 26q2-5.500 8-5.500t8 5.500q-8 6.500-16 0z" fill="#7d5c28"/><path d="M35.500 12h2v7h-2z" fill="#5eb1cf"/><path d="M35.500 19h2v6h-2z" fill="#ef8c32"/><path d="M35.500 25h2v6h-2z" fill="#4fc45e"/>'),
cal:app(['#fff','#f4f4f4'],'<path d="M0 0h37v12H0z" fill="#fb4a42"/><text x="18.500" y="8.800" fill="#fff" font-family="Inter" font-weight="600" font-size="7" text-anchor="middle">OCT</text><text x="18.500" y="30.500" fill="#333" font-family="Inter" font-size="21" text-anchor="middle" textLength="12">7</text>'),
notes:app(['#fbfaf7','#eceae6'],'<path d="M0 0h37v10H0z" fill="#fdcb0a"/><path d="M0 18.500h37M0 27.500h37" stroke="#d6d4cf"/><path d="M1 11.500h36" stroke="#c2c0bb" stroke-width=".8" stroke-dasharray="1 1"/>'),
maps:app(['#42d15d','#36c653'],'<path d="M0 22l12-9 25 18v6H0z" fill="#f4f4f4"/><path d="M0 22l8 3v12H0z" fill="#ef9ad0"/><path d="M20 30l12 7H18z" fill="#fbcb19"/><circle cx="35" cy="3" r="10" stroke="#eee" stroke-width="4"/><circle cx="35" cy="3" r="6" fill="#bbc4cc"/><path d="M9 0h9v20H9z" fill="#2178f3" stroke="#fff" stroke-width="1"/><path d="M0 10l7 5v5l-7-5z" fill="#fff"/><circle cx="13.500" cy="23.500" r="8.700" fill="#1877f2" stroke="#fff" stroke-width="1.500"/><path d="M13.500 17.500l4.500 11-4.500-2.500L9 28.500z" fill="#fff"/>'),
photos:app(['#fff','#f8f8f8'],['#f8a01a','#cfd322','#7cc64f','#5bb8a0','#5a9bd6','#9b76c8','#d672a8','#ee5a45'].map((c,i)=>`<ellipse cx="18.500" cy="10" rx="5.300" ry="7.500" fill="${c}" opacity=".88" transform="rotate(${i*45} 18.500 18.500)"/>`).join('')),
msg:app(['#2bef5c','#10c82d'],'<ellipse cx="18.500" cy="17.500" rx="13.300" ry="11" fill="#e6f9e8"/><path d="M8 23.500q.5 4-1.500 6.300 5 0 8-3z" fill="#e6f9e8"/>'),
ft:app(['#2bef5c','#10c82d'],'<rect x="6" y="10.500" width="17.500" height="16" rx="4" fill="#e6f9e8"/><path d="M24.500 17l6.500-5v13l-6.500-5z" fill="#e6f9e8"/>'),
books:app(['#fe9a0d','#fc7608'],'<path d="M17.500 11q-5-4-11.500-1v18q6-2.800 11.500.7zM19.500 11q5-4 11.500-1v18q-6-2.800-11.500.7z" fill="#f8f4ef"/>'),
music:app(['#fc4560','#f8183a'],'<path d="M13.500 26.500V10.500L26 7.500v15.500" stroke="#fff" stroke-width="2"/><path d="M13.500 9.500L27 6.500v4.500l-13.500 3z" fill="#fff"/><ellipse cx="10.800" cy="26.800" rx="3.700" ry="3" fill="#fff"/><ellipse cx="23.300" cy="23.800" rx="3.700" ry="3" fill="#fff"/>'),
pod:app(['#c83cf0','#7b14c5'],'<path d="M9.800 28A13 13 0 1 1 27.200 28" stroke="#fff" stroke-width="1.600"/><path d="M13 23.500a8.200 8.200 0 1 1 11 0" stroke="#fff" stroke-width="1.600"/><circle cx="18.500" cy="17.200" r="3.500" fill="#fff"/><path d="M15.500 22.500h6l-1 9q-2 1.500-4 0z" fill="#fff"/>'),
tv:app(['#26302e','#0d1212'],`<g transform="translate(4.500,11.500)">${apple(12.5,'#fff')}</g><text x="17" y="24" fill="#fff" font-family="Inter" font-weight="500" font-size="14.500">tv</text>`),
store:app(['#18b2fc','#1a62ed'],'<path d="M20.800 8L10.500 26M16.300 8l11 19.500M6.500 23.500h14M24 23.500h6.500M9.500 27.500l-.8 1.300" stroke="#fff" stroke-width="2.600" stroke-linecap="round"/>'),
set:app(['#c5d0d5','#7d8284'],'<circle cx="18.500" cy="18.500" r="15" fill="#666a6c" stroke="#393b3c" stroke-width="1.500"/><circle cx="18.500" cy="18.500" r="13.300" stroke="#303233" stroke-width="1.700" stroke-dasharray="1 .8"/><circle cx="18.500" cy="18.500" r="10" fill="#85898b" stroke="#2d2f30" stroke-width="2"/><circle cx="18.500" cy="18.500" r="3.300" fill="#85898b" stroke="#2d2f30" stroke-width="1.500"/><path d="M21.500 18.500h7M17 21.300l-3.800 6M17 15.700l-3.800-6" stroke="#2d2f30" stroke-width="1.800"/>'),
team:app(['#17106a','#120a58'],'<circle cx="18.500" cy="18.500" r="14.300" fill="#fff"/><path d="M5.500 18.500l8-5.500-1.300 3.800h12.600L23.500 13l8 5.500-8 5.500 1.300-3.800H12.200l1.300 3.800z" fill="#120a58"/>'),
doc:svg(27,44,'<path d="M2 5h22v37H2z" fill="#f5f5f5"/><path d="M0 4l3-1v39H0z" fill="#222"/><path d="M3 2l14-2 2 4h7v38H3z" fill="#efefef"/><path d="M6 13l4-2 2 3 4 1-3 3-2 6-3-6-3-2z" fill="#c99a74"/><path d="M17 7h7M17 10h7M17 13h7M17 16h7M15 6v15" stroke="#bbb" stroke-width=".7"/>'),
w1:`<div class="wn">${svg(43,25,'<path d="M0 0h43v25H0z" fill="#fcfcfc"/><path d="M0 0h43v2H0z" fill="#333"/><path d="M32 .3h5v1.500h-5z" fill="#3c9a3c"/><path d="M5 10h20M19 13h6M5 16h30M5 18.500h31M5 21h28" stroke="#aaa" stroke-width=".9"/><path d="M5 10h8" stroke="#444"/>')}<span>${pdf(15)}</span></div>`,
w2:`<div class="wn">${svg(43,27,'<path d="M0 0h43v27H0z" fill="#26282b"/><path d="M0 0h43v3H0z" fill="#5d8fe8"/><path d="M5 5v17" stroke="#666" stroke-width="1.500"/><path d="M16 8h17v15H16z" fill="#f3f3f3"/><path d="M21 14h5v6h-5z" fill="#1c2430"/><path d="M36 5h6v20h-6z" fill="#3b3e43"/>')}<span class="cr"><svg width="14" height="14" viewBox="0 0 37 37"><rect width="37" height="37" rx="7" fill="#fff"/>${pie}</svg></span></div>`,
trash:svg(34,44,'<path d="M2 6h30l-4 34q-.5 3-11 3T6 40z" fill="#d9dad8"/><path d="M7 12l3 28M14 13l1 28M21 13l-1 28M28 12l-4 27" stroke="#e6e6e5" stroke-width="3"/><ellipse cx="17" cy="6.500" rx="15" ry="4.500" fill="#e8e8e8"/><path d="M6 7l4-4 5 2 5-4 5 4 4 1-3 4-6-1-5 2-5-2z" fill="#fff"/><path d="M9 6l3 2M15 4l2 4M21 5l-2 4M25 6l-3 3" stroke="#444" stroke-width="1.500"/><path d="M12 4l3 3" stroke="#3aa" stroke-width="1.500"/>'),
tableau:tabIcon,pdf:pdf(40)};
define('dock-item',`:host{display:flex;width:48.54px;height:100%;align-items:center;justify-content:center;position:relative;flex:none;padding-bottom:5px}
 svg{display:block;flex:none}.tab{width:39px;height:39px;background:#f6f7f7;display:flex;align-items:center;justify-content:center;box-shadow:0 1px 2px #0004}
 .dot{position:absolute;left:22.500px;bottom:1px;width:4px;height:4px;border-radius:2px;background:#3a2c20}
 .bd{position:absolute;right:-1px;top:4px;width:18px;height:18px;border-radius:9px;background:#f5201d;color:#fff;font:500 10px/18px Inter;text-align:center}
 .wn{position:relative;margin-top:4px}.wn span{position:absolute;right:0;bottom:-8px}.wn .cr{bottom:-6px;right:1px}`,
 el=>icons[el.getAttribute('name')]+(el.hasAttribute('open')?'<i class="dot"></i>':'')+(el.hasAttribute('badge')?`<span class="bd">${el.getAttribute('badge')}</span>`:''));
define('mac-dock',`:host{display:flex;align-items:center;width:1360px;height:60px;margin:1px 0 0 40px;border:1px solid #ffffff40;border-radius:17px;padding-left:2px;flex:none;
 background:linear-gradient(90deg,#a29b86 0,#98998a 90px,#929b92 180px,#a39d95 260px,#e09a9b 300px,#ec9fa3 350px,#efa5a6 560px,#dbacaa 640px,#bfb2a4 720px,#ccc0b0 870px,#b4ac9c 940px,#a4a390 1020px,#a3a28f 1200px,#9a9c8b 1360px)}
 i{width:22.400px;display:flex;justify-content:center;flex:none}i::after{content:"";width:1px;height:44px;background:#706f60}`,
 ()=>'finder*,safari,chrome*,launch,rem,mail,contacts,cal,notes,maps*,photos,msg,ft,books,music,pod,tv,store,set!,tableau*,|,team*,pdf*,tableau,|,doc,w1,w2,trash'.split(',').map(n=>n=='|'?'<i></i>':`<dock-item name="${n.replace(/[*!]/,'')}" ${n.endsWith('*')?'open':''} ${n.endsWith('!')?'badge="2"':''}></dock-item>`).join(''));
</script>
</body>
</html>
